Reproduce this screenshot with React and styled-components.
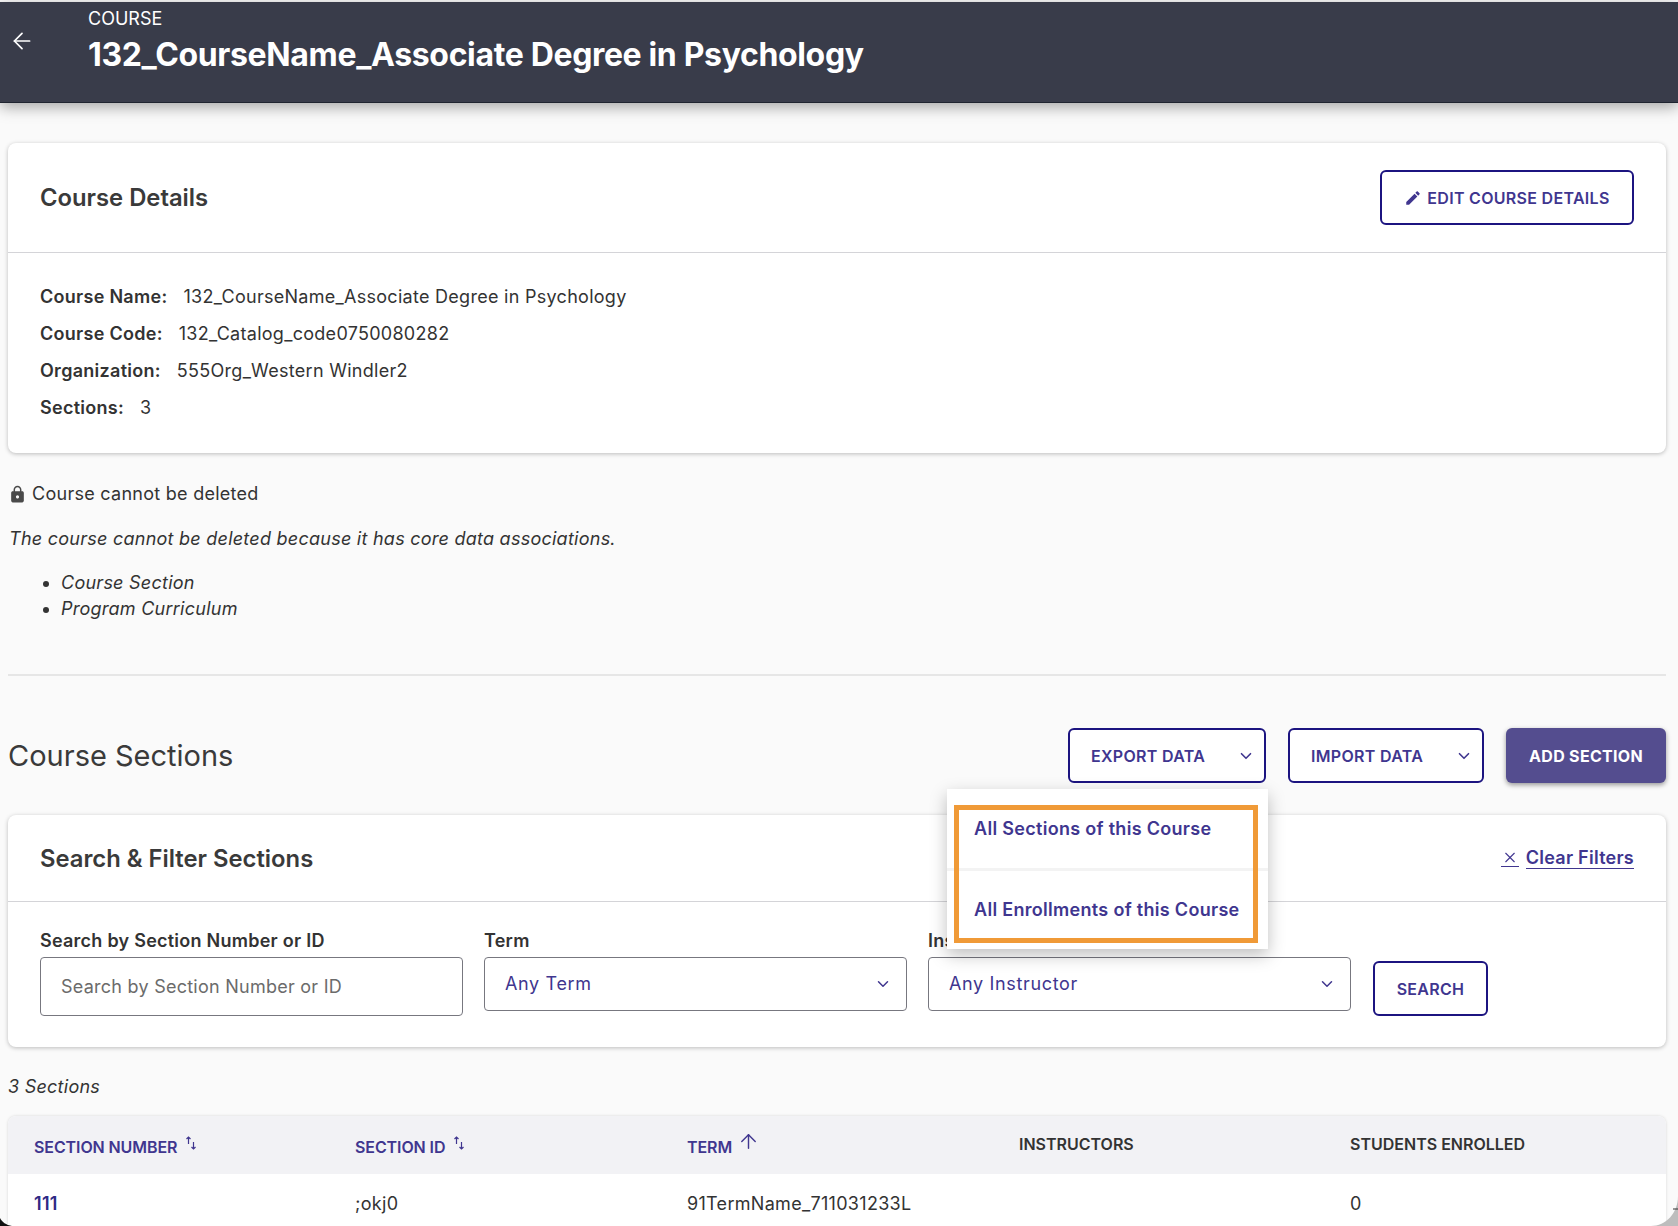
import React from "react";
import styled, { createGlobalStyle } from "styled-components";
import { ArrowLeft, ArrowUp, ChevronDown, X } from "lucide-react";

const Global = createGlobalStyle`
  html, body { margin: 0; padding: 0; background: #fafafa; }
  body { font-family: Inter, "Noto Sans", sans-serif; color: #333; }
  * { box-sizing: border-box; }
`;

const Page = styled.div`
  width: 1678px;
  height: 1226px;
  padding-top: 2px;
  background: #fafafa;
  overflow: hidden;
  position: relative;
`;

const Header = styled.header`
  height: 101px;
  background: #393c4a;
  color: #fff;
  display: flex;
  box-shadow: 0 4px 14px rgba(0, 0, 0, 0.35);
  border-bottom: 1px solid #1f2430;
`;

const BackButton = styled.div`
  width: 88px;
  padding: 26px 0 0 9px;
`;

const HeaderText = styled.div`
  padding-top: 7px;
`;

const Eyebrow = styled.div`
  font-size: 18px;
  line-height: 20px;
`;

const Title = styled.h1`
  margin: 6px 0 0;
  font-size: 32px;
  line-height: 40px;
  font-weight: 700;
  letter-spacing: -0.35px;
`;

const Content = styled.main`
  padding: 40px 12px 0 8px;
`;

const Card = styled.section`
  background: #fff;
  border-radius: 8px;
  box-shadow: 0 1px 4px rgba(0, 0, 0, 0.25);
`;

const CardHead = styled.div`
  height: ${(p) => p.$height}px;
  padding: 0 32px;
  display: flex;
  align-items: center;
  justify-content: space-between;
  border-bottom: 1px solid #d4d4d8;
`;

const CardTitle = styled.h2`
  margin: 0;
  font-size: 23.8px;
  font-weight: 600;
  color: #3a3a3a;
`;

const OutlineButton = styled.button`
  height: 55px;
  width: ${(p) => p.$width}px;
  padding: 0 ${(p) => p.$padRight ?? 0}px 0 ${(p) => p.$padLeft ?? 0}px;
  display: flex;
  align-items: center;
  justify-content: ${(p) => p.$justify || "center"};
  gap: ${(p) => p.$gap ?? 8}px;
  background: #fff;
  color: #40368f;
  border: 2px solid #1c1480;
  border-radius: 6px;
  font: 600 16px Inter, sans-serif;
  letter-spacing: 0.3px;
  white-space: nowrap;
`;

const DetailList = styled.div`
  padding: 32px 32px 0;
  height: 200px;
  display: flex;
  flex-direction: column;
  gap: 13px;
`;

const DetailRow = styled.div`
  font-size: 18px;
  line-height: 24px;
  letter-spacing: 0.28px;
  color: #333;
  b {
    font-weight: 600;
    margin-right: 16px;
  }
`;

const Notice = styled.div`
  margin-top: 30px;
  display: flex;
  align-items: center;
  gap: 5px;
  font-size: 18px;
  line-height: 22px;
  letter-spacing: 0.27px;
`;

const Italic = styled.p`
  margin: 23px 0 0;
  font-size: 18px;
  line-height: 22px;
  font-style: italic;
  letter-spacing: 0.25px;
  padding-left: 1px;
`;

const Bullets = styled.ul`
  margin: 20px 0 0;
  padding-left: 53px;
  font-size: 18px;
  font-style: italic;
  letter-spacing: 0.25px;
  line-height: 26px;
`;

const Rule = styled.hr`
  margin: 52px 0 0;
  height: 2px;
  border: 0;
  background: #e6e6e6;
`;

const SectionsBar = styled.div`
  margin-top: 52px;
  height: 55px;
  display: flex;
  align-items: center;
  gap: 22px;
`;

const SectionsTitle = styled.h2`
  margin: 0 auto 0 0;
  font-size: 29px;
  font-weight: 400;
  color: #3a3a3a;
`;

const AddButton = styled.button`
  width: 160px;
  height: 55px;
  border: 0;
  border-radius: 6px;
  background: #544d8f;
  color: #fff;
  font: 700 16px Inter, sans-serif;
  letter-spacing: 0.3px;
  box-shadow: 0 2px 5px rgba(0, 0, 0, 0.4);
`;

const ClearFilters = styled.a`
  display: flex;
  gap: 7px;
  align-items: center;
  color: #40368f;
  font-size: 18px;
  font-weight: 600;
  letter-spacing: 0.25px;
  span,
  svg {
    border-bottom: 1px solid #40368f;
  }
`;

const FilterCard = styled(Card)`
  margin-top: 32px;
`;

const FilterRow = styled.div`
  height: 145px;
  padding: 28px 32px 0;
  display: flex;
  align-items: flex-start;
  gap: 21px;
`;

const Field = styled.div`
  width: ${(p) => p.$width}px;
`;

const FieldLabel = styled.label`
  display: block;
  font-size: 18px;
  font-weight: 600;
  letter-spacing: 0.25px;
  line-height: 22px;
  margin-bottom: 5px;
  color: #333;
`;

const TextInput = styled.div`
  height: 59px;
  padding: 0 20px;
  display: flex;
  align-items: center;
  border: 1px solid #77777f;
  border-radius: 4px;
  color: #6b6b6b;
  font-size: 18px;
  letter-spacing: 0.25px;
`;

const SelectBox = styled(TextInput)`
  height: 54px;
  justify-content: space-between;
  color: #40368f;
  padding-right: 14px;
  padding-bottom: 1px;
  letter-spacing: 0.65px;
`;

const SearchButton = styled(OutlineButton)`
  margin: 31px 0 0 1px;
`;

const Count = styled.div`
  margin-top: 29px;
  font-size: 18px;
  font-style: italic;
  letter-spacing: 0.25px;
  line-height: 22px;
`;

const Table = styled.div`
  margin-top: 18px;
  background: #fff;
  border-radius: 8px 8px 0 0;
  box-shadow: 0 0 3px rgba(0, 0, 0, 0.15);
`;

const Row = styled.div`
  display: grid;
  grid-template-columns: 321px 332px 332px 331px 1fr;
  height: 58px;
  padding-left: 26px;
  align-items: center;
`;

const HeadRow = styled(Row)`
  padding-bottom: 2px;
  background: #f2f2f5;
  border-radius: 8px 8px 0 0;
`;

const HeadCell = styled.div`
  display: flex;
  align-items: flex-start;
  font-size: 16px;
  font-weight: 600;
  letter-spacing: ${(p) => (p.$sortable ? "-0.1px" : "0")};
  color: ${(p) => (p.$sortable ? "#40368f" : "#333")};
  padding-top: ${(p) => (p.$sortable ? 5 : 0)}px;
`;

const SortMark = styled.svg`
  margin: -2px 0 0 8px;
`;

const TermArrow = styled(ArrowUp)`
  margin: -7px 0 0 5px;
`;

const BodyCell = styled.div`
  font-size: 18px;
  letter-spacing: 0.3px;
  color: ${(p) => (p.$link ? "#2f2a85" : "#333")};
  font-weight: ${(p) => (p.$link ? 600 : 400)};
`;

const Menu = styled.div`
  position: absolute;
  left: 947px;
  top: 789px;
  width: 321px;
  height: 160px;
  background: #fff;
  box-shadow: 0 6px 16px rgba(0, 0, 0, 0.25);
`;

const MenuItem = styled.div`
  height: ${(p) => p.$height}px;
  padding: ${(p) => p.$top}px 0 0 27px;
  color: #40368f;
  font-size: 18px;
  font-weight: 600;
  letter-spacing: 0.3px;
  border-bottom: ${(p) => (p.$rule ? "3px solid #f3f3f3" : "0")};
`;

const Highlight = styled.div`
  position: absolute;
  left: 7px;
  top: 16px;
  width: 304px;
  height: 138px;
  border: 5px solid #f09a37;
`;

const CornerDark = styled.svg`
  position: absolute;
  left: 0;
  bottom: 0;
`;

const CornerGrey = styled.svg`
  position: absolute;
  right: 0;
  bottom: 0;
`;

const SortIcon = () => (
  <SortMark width="12" height="16" viewBox="0 0 12 16" fill="none" stroke="#40368f" strokeWidth="1.2">
    <path d="M3.5 9V2M1.500 4l2-2 2 2" />
    <path d="M8.500 7v7M6.500 12l2 2 2-2" />
  </SortMark>
);

const LockIcon = () => (
  <svg width="19" height="19" viewBox="0 0 24 24">
    <path fill="#4a4a4a" d="M18 8h-1V6c0-2.760-2.240-5-5-5S7 3.240 7 6v2H6c-1.100 0-2 .9-2 2v10c0 1.100.9 2 2 2h12c1.100 0 2-.9 2-2V10c0-1.100-.9-2-2-2zm-6 9c-1.100 0-2-.9-2-2s.9-2 2-2 2 .9 2 2-.9 2-2 2zm3.100-9H8.900V6c0-1.710 1.390-3.100 3.100-3.100 1.710 0 3.100 1.390 3.100 3.100v2z" />
  </svg>
);

const PencilIcon = () => (
  <svg width="18" height="18" viewBox="0 0 24 24">
    <path fill="#40368f" d="M3 17.250V21h3.750L17.810 9.940l-3.750-3.750L3 17.250zM20.710 7.040c.39-.39.39-1.020 0-1.410l-2.340-2.340c-.39-.39-1.020-.39-1.410 0l-1.830 1.830 3.750 3.750 1.830-1.830z" />
  </svg>
);

export default function App() {
  return (
    <Page>
      <Global />
      <Header>
        <BackButton>
          <ArrowLeft size={26} strokeWidth={1.6} color="#fff" />
        </BackButton>
        <HeaderText>
          <Eyebrow>COURSE</Eyebrow>
          <Title>132_CourseName_Associate Degree in Psychology</Title>
        </HeaderText>
      </Header>
      <Content>
        <Card>
          <CardHead $height={110}>
            <CardTitle>Course Details</CardTitle>
            <OutlineButton $width={254} $gap={5}>
              <PencilIcon />
              EDIT COURSE DETAILS
            </OutlineButton>
          </CardHead>
          <DetailList>
            <DetailRow><b>Course Name:</b>132_CourseName_Associate Degree in Psychology</DetailRow>
            <DetailRow><b>Course Code:</b>132_Catalog_code0750080282</DetailRow>
            <DetailRow><b>Organization:</b>555Org_Western Windler2</DetailRow>
            <DetailRow><b>Sections:</b>3</DetailRow>
          </DetailList>
        </Card>
        <Notice>
          <LockIcon />
          Course cannot be deleted
        </Notice>
        <Italic>The course cannot be deleted because it has core data associations.</Italic>
        <Bullets>
          <li>Course Section</li>
          <li>Program Curriculum</li>
        </Bullets>
        <Rule />
        <SectionsBar>
          <SectionsTitle>Course Sections</SectionsTitle>
          <OutlineButton $width={198} $justify="space-between" $padLeft={21} $padRight={9}>
            EXPORT DATA
            <ChevronDown size={18} strokeWidth={2.2} />
          </OutlineButton>
          <OutlineButton $width={196} $justify="space-between" $padLeft={21} $padRight={9}>
            IMPORT DATA
            <ChevronDown size={18} strokeWidth={2.2} />
          </OutlineButton>
          <AddButton>ADD SECTION</AddButton>
        </SectionsBar>
        <FilterCard>
          <CardHead $height={87}>
            <CardTitle>Search &amp; Filter Sections</CardTitle>
            <ClearFilters>
              <X size={18} strokeWidth={1.5} />
              <span>Clear Filters</span>
            </ClearFilters>
          </CardHead>
          <FilterRow>
            <Field $width={423}>
              <FieldLabel>Search by Section Number or ID</FieldLabel>
              <TextInput>Search by Section Number or ID</TextInput>
            </Field>
            <Field $width={423}>
              <FieldLabel>Term</FieldLabel>
              <SelectBox>
                Any Term
                <ChevronDown size={18} />
              </SelectBox>
            </Field>
            <Field $width={423}>
              <FieldLabel>Instructor</FieldLabel>
              <SelectBox>
                Any Instructor
                <ChevronDown size={18} />
              </SelectBox>
            </Field>
            <SearchButton $width={115}>SEARCH</SearchButton>
          </FilterRow>
        </FilterCard>
        <Count>3 Sections</Count>
        <Table>
          <HeadRow>
            <HeadCell $sortable>SECTION NUMBER<SortIcon /></HeadCell>
            <HeadCell $sortable>SECTION ID<SortIcon /></HeadCell>
            <HeadCell $sortable>TERM<TermArrow size={23} strokeWidth={1.5} /></HeadCell>
            <HeadCell>INSTRUCTORS</HeadCell>
            <HeadCell>STUDENTS ENROLLED</HeadCell>
          </HeadRow>
          <Row>
            <BodyCell $link>111</BodyCell>
            <BodyCell>;okj0</BodyCell>
            <BodyCell>91TermName_711031233L</BodyCell>
            <BodyCell />
            <BodyCell>0</BodyCell>
          </Row>
        </Table>
      </Content>
      <Menu>
        <MenuItem $height={82} $top={29} $rule>All Sections of this Course</MenuItem>
        <MenuItem $height={78} $top={28}>All Enrollments of this Course</MenuItem>
        <Highlight />
      </Menu>
      <CornerDark width="12" height="8" viewBox="0 0 12 8">
        <path d="M0 0C2 4 6 7 12 8H0Z" fill="#111" />
      </CornerDark>
      <CornerGrey width="27" height="30" viewBox="0 0 27 30">
        <path d="M27 0C27 17 15 30 0 30H27Z" fill="#bdbdbd" />
        <path d="M22 13H27" stroke="#333" strokeWidth="1" />
      </CornerGrey>
    </Page>
  );
}
